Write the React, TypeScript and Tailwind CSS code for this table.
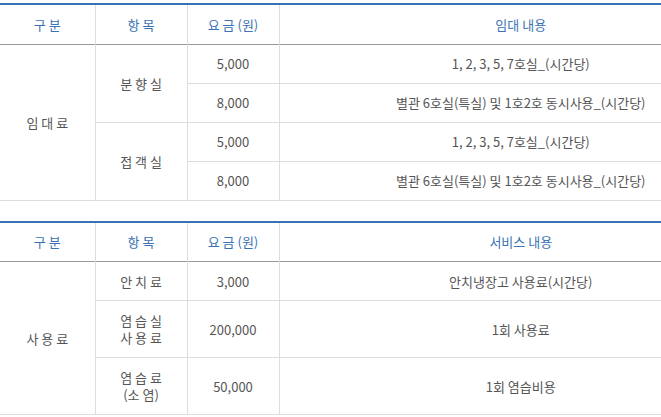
const font = { fontFamily: '"Noto Sans CJK KR", "Noto Sans", sans-serif' }

type Row = { cells: { text: string[]; rowSpan?: number }[]; h: string }

const rentRows: Row[] = [
  { h: "h-[39px]", cells: [{ text: ["임 대 료"], rowSpan: 4 }, { text: ["분 향 실"], rowSpan: 2 }, { text: ["5,000"] }, { text: ["1, 2, 3, 5, 7호실_(시간당)"] }] },
  { h: "h-[39px]", cells: [{ text: ["8,000"] }, { text: ["별관 6호실(특실) 및 1호2호 동시사용_(시간당)"] }] },
  { h: "h-[39px]", cells: [{ text: ["접 객 실"], rowSpan: 2 }, { text: ["5,000"] }, { text: ["1, 2, 3, 5, 7호실_(시간당)"] }] },
  { h: "h-[39px]", cells: [{ text: ["8,000"] }, { text: ["별관 6호실(특실) 및 1호2호 동시사용_(시간당)"] }] },
]

const useRows: Row[] = [
  { h: "h-[39px]", cells: [{ text: ["사 용 료"], rowSpan: 3 }, { text: ["안 치 료"] }, { text: ["3,000"] }, { text: ["안치냉장고 사용료(시간당)"] }] },
  { h: "h-[57px]", cells: [{ text: ["염 습 실", "사 용 료"] }, { text: ["200,000"] }, { text: ["1회 사용료"] }] },
  { h: "h-[57px]", cells: [{ text: ["염 습 료", "(소 염)"] }, { text: ["50,000"] }, { text: ["1회 염습비용"] }] },
]

const FeeTable = ({ last, rows }: { last: string; rows: Row[] }) => {
  const heads = ["구 분", "항 목", "요 금 (원)", last]
  return (
    <table className="w-[762px] table-fixed border-collapse border-t-2 border-[#3672b4] text-[13px]">
      <colgroup>
        <col className="w-[95px]" />
        <col className="w-[92px]" />
        <col className="w-[92px]" />
        <col />
      </colgroup>
      <thead>
        <tr className="h-[40px] border-b border-[#999]">
          {heads.map((h, i) => (
            <th key={i} className={`p-0 text-center font-normal text-[#3a72b4] ${i > 0 ? "border-l border-[#ddd]" : ""}`}>
              {h}
            </th>
          ))}
        </tr>
      </thead>
      <tbody>
        {rows.map((r, ri) => (
          <tr key={ri} className={`${r.h} border-b border-[#ddd]`}>
            {r.cells.map((c, ci) => (
              <td
                key={ci}
                rowSpan={c.rowSpan}
                className={`p-0 text-center align-middle leading-[17px] text-[#555] ${
                  c.rowSpan === rows.length ? "" : "border-l border-[#ddd]"
                }`}
              >
                {c.text.map((t, ti) => (
                  <div key={ti}>{t}</div>
                ))}
              </td>
            ))}
          </tr>
        ))}
      </tbody>
    </table>
  )
}

export default function App() {
  return (
    <div className="w-[661px] h-[417px] overflow-hidden bg-white pt-[3px]" style={font}>
      <FeeTable last="임대 내용" rows={rentRows} />
      <div className="h-[20px]" />
      <FeeTable last="서비스 내용" rows={useRows} />
    </div>
  )
}
